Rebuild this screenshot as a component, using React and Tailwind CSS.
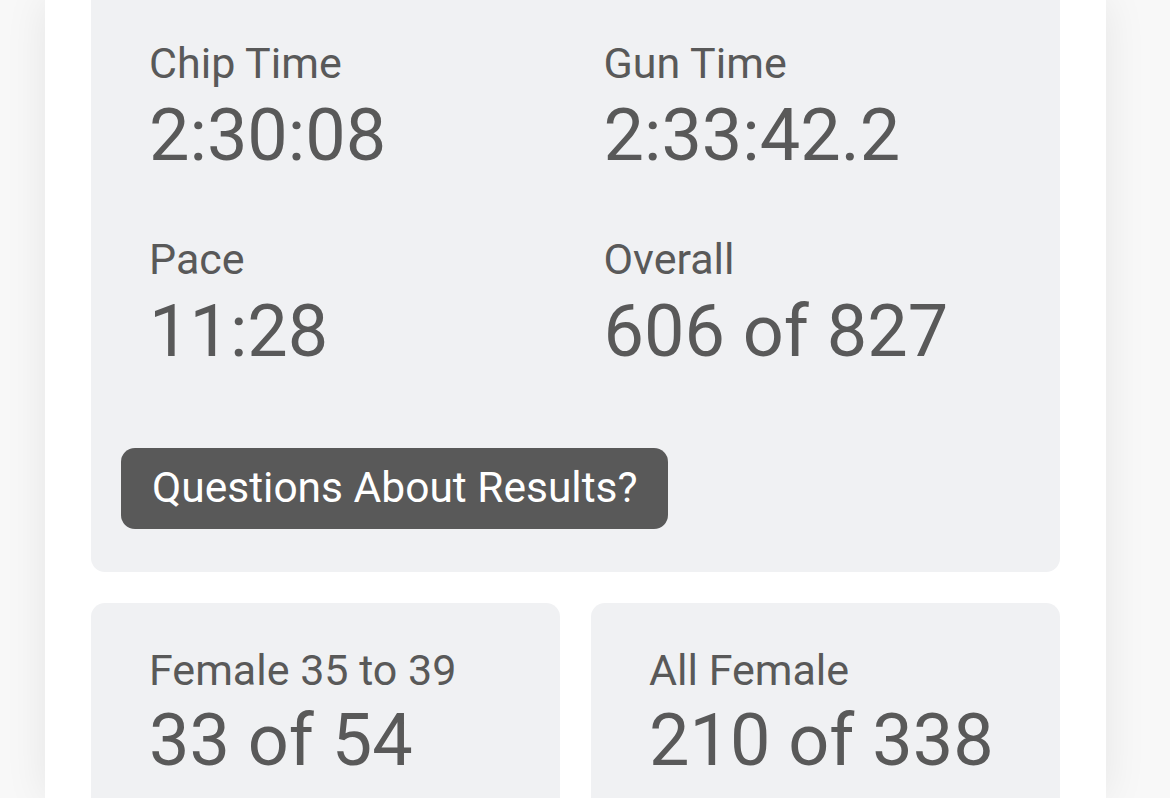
const stats = [
  { label: 'Chip Time', value: '2:30:08' },
  { label: 'Gun Time', value: '2:33:42.2' },
  { label: 'Pace', value: '11:28' },
  { label: 'Overall', value: '606 of 827' },
];

const groups = [
  { label: 'Female 35 to 39', value: '33 of 54' },
  { label: 'All Female', value: '210 of 338' },
];

function Stat({ label, value }) {
  return (
    <div className="flex flex-col gap-[15px] pl-[28px]">
      <div className="text-[43px] leading-none">{label}</div>
      <div className="text-[72px] leading-none">{value}</div>
    </div>
  );
}

export default function App() {
  return (
    <div
      className="h-[798px] overflow-hidden bg-[#f8f8f8] text-[#595959]"
      style={{ fontFamily: 'Roboto, "Liberation Sans", sans-serif' }}
    >
      <div className="mx-[45px] w-[1061px] h-full bg-white px-[46px] shadow-[0_0_40px_rgba(0,0,0,0.08)]">
        <div className="rounded-b-[14px] bg-[#f0f1f3] px-[30px] pt-[42px] pb-[43px]">
          <div className="grid grid-cols-2 gap-y-[66px]">
            {stats.map((s) => (
              <Stat key={s.label} {...s} />
            ))}
          </div>
          <button className="mt-[80px] h-[81px] rounded-[14px] bg-[#595959] pl-[31px] pr-[30px] text-[42.5px] leading-none text-white">
            Questions About Results?
          </button>
        </div>

        <div className="mt-[31px] grid grid-cols-2 gap-[31px]">
          {groups.map((g) => (
            <div key={g.label} className="h-[260px] rounded-[14px] bg-[#f0f1f3] px-[58px] pt-[46px]">
              <div className="text-[43px] leading-none">{g.label}</div>
              <div className="mt-[13px] text-[72px] leading-none">{g.value}</div>
            </div>
          ))}
        </div>
      </div>
    </div>
  );
}
